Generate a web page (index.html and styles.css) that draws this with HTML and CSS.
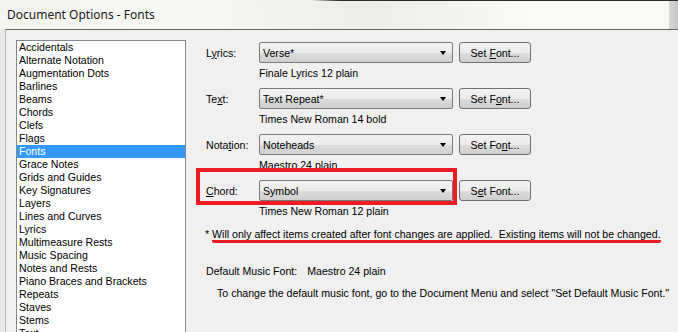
FILE: index.html
```html
<!DOCTYPE html>
<html lang="en">
<head>
    <meta charset="UTF-8">
    <title>Document Options - Fonts</title>
    <link rel="stylesheet" href="styles.css">
</head>
<body>
    <div class="titlebar">
        <div class="title">Document Options - Fonts</div>
        <div class="edge"></div>
    </div>
    <div class="window">
        <div class="frame-left"></div>
        <div class="client">
            <ul class="list">
                <li>Accidentals</li>
                <li>Alternate Notation</li>
                <li>Augmentation Dots</li>
                <li>Barlines</li>
                <li>Beams</li>
                <li>Chords</li>
                <li>Clefs</li>
                <li>Flags</li>
                <li class="selected">Fonts</li>
                <li>Grace Notes</li>
                <li>Grids and Guides</li>
                <li>Key Signatures</li>
                <li>Layers</li>
                <li>Lines and Curves</li>
                <li>Lyrics</li>
                <li>Multimeasure Rests</li>
                <li>Music Spacing</li>
                <li>Notes and Rests</li>
                <li>Piano Braces and Brackets</li>
                <li>Repeats</li>
                <li>Staves</li>
                <li>Stems</li>
                <li>Text</li>
            </ul>

            <div class="panel">
                <div class="font-row">
                    <div class="field">
                        <label>L<u>y</u>rics:</label>
                        <div class="combo"><span>Verse*</span><i class="arrow"></i></div>
                        <button>Set <u>F</u>ont...</button>
                    </div>
                    <div class="desc">Finale Lyrics 12 plain</div>
                </div>
                <div class="font-row">
                    <div class="field">
                        <label>Te<u>x</u>t:</label>
                        <div class="combo"><span>Text Repeat*</span><i class="arrow"></i></div>
                        <button>Set F<u>o</u>nt...</button>
                    </div>
                    <div class="desc">Times New Roman 14 bold</div>
                </div>
                <div class="font-row">
                    <div class="field">
                        <label>Nota<u>t</u>ion:</label>
                        <div class="combo"><span>Noteheads</span><i class="arrow"></i></div>
                        <button>Set Fo<u>n</u>t...</button>
                    </div>
                    <div class="desc">Maestro 24 plain</div>
                </div>
                <div class="font-row">
                    <div class="field marked">
                        <label><u>C</u>hord:</label>
                        <div class="combo"><span>Symbol</span><i class="arrow"></i></div>
                        <button>S<u>e</u>t Font...</button>
                    </div>
                    <div class="desc">Times New Roman 12 plain</div>
                </div>

                <p class="note">* <span class="redline">Will only affect items created after font changes are applied.&nbsp; Existing items will not be changed.</span></p>

                <p class="default">Default Music Font:<span class="value">Maestro 24 plain</span></p>
                <p class="hint">To change the default music font, go to the Document Menu and select "Set Default Music Font."</p>
            </div>
        </div>
    </div>
</body>
</html>
```

FILE: styles.css
```css
body {
    margin: 0;
    width: 678px;
    height: 332px;
    overflow: hidden;
    background: #f0f0f0;
    font-family: "Liberation Sans", Arial, sans-serif;
    font-size: 10.6px;
    color: #000;
}

.titlebar {
    height: 29px;
    display: flex;
    background: linear-gradient(to right, #f4f4f0 0%, #f7f7f3 30%, #ececE8 55%, #fafaf6 80%, #f9f9f6 100%);
    border-top: 1px solid transparent;
    border-image: linear-gradient(to right, transparent 0%, transparent 46%, #2b2b2b 50%, #2b2b2b 100%) 1;
    box-sizing: border-box;
}
.title {
    flex: 1;
    padding: 5px 0 0 7px;
    font-family: "Noto Sans", sans-serif;
    font-size: 12px;
    color: #1b1b1b;
}
.edge {
    width: 9px;
    background: linear-gradient(to right, #d8d8d6, #c4c4c4);
}

.window {
    display: flex;
    height: 303px;
}
.frame-left {
    width: 5px;
    flex-shrink: 0;
    background: #e9e9e9;
}
.client {
    flex: 1;
    min-width: 0;
    display: flex;
    border-top: 1px solid #666;
    border-left: 1px solid #b5b5b5;
    padding: 10px 0 0 10px;
    background: #f0f0f0;
}

.list {
    list-style: none;
    margin: 0;
    padding: 0;
    width: 168px;
    height: 300px;
    background: #fff;
    border: 1px solid #828790;
    overflow: hidden;
    flex-shrink: 0;
}
.list li {
    height: 13px;
    line-height: 13px;
    padding-left: 2px;
    white-space: nowrap;
}
.list li.selected {
    background: #3399ff;
    color: #fff;
}

.panel {
    margin-left: 20px;
    padding-top: 2px;
    flex: 1;
    min-width: 0;
    white-space: nowrap;
}
.font-row {
    margin-bottom: 7px;
}
.field {
    display: flex;
    align-items: center;
    height: 21px;
    position: relative;
}
.field label {
    width: 53px;
    flex-shrink: 0;
}
.field.marked::before {
    content: "";
    position: absolute;
    left: -10px;
    top: -12px;
    width: 253px;
    height: 29px;
    border: 4.5px solid #ed1c24;
}
.combo {
    width: 189px;
    height: 19px;
    flex-shrink: 0;
    border: 1px solid #7a7a7a;
    border-radius: 2px;
    background: linear-gradient(#f3f3f3 0%, #ebebeb 50%, #dddddd 51%, #cfcfcf 100%);
    display: flex;
    align-items: center;
    padding-left: 3px;
}
.combo span {
    flex: 1;
}
.arrow {
    width: 0;
    height: 0;
    border-left: 3.5px solid transparent;
    border-right: 3.5px solid transparent;
    border-top: 4px solid #000;
    margin-right: 6px;
}
button {
    margin-left: 6px;
    width: 72px;
    height: 21px;
    flex-shrink: 0;
    border: 1px solid #707070;
    border-radius: 3px;
    background: linear-gradient(#f2f2f2 0%, #ebebeb 50%, #dddddd 51%, #cfcfcf 100%);
    font-family: "Liberation Sans", Arial, sans-serif;
    font-size: 10.6px;
    color: #000;
    padding: 0;
}
.desc {
    margin-top: 2px;
    padding-left: 53px;
    height: 16px;
    line-height: 16px;
}

.note {
    margin: 1px 0 0 -1px;
    line-height: 16px;
}
.redline {
    border-bottom: 3px solid #ed1c24;
    border-radius: 2px;
}
.default {
    margin: 21px 0 0 0;
    line-height: 16px;
}
.default .value {
    margin-left: 10px;
}
.hint {
    margin: 6px 0 0 11px;
    line-height: 16px;
}
```
